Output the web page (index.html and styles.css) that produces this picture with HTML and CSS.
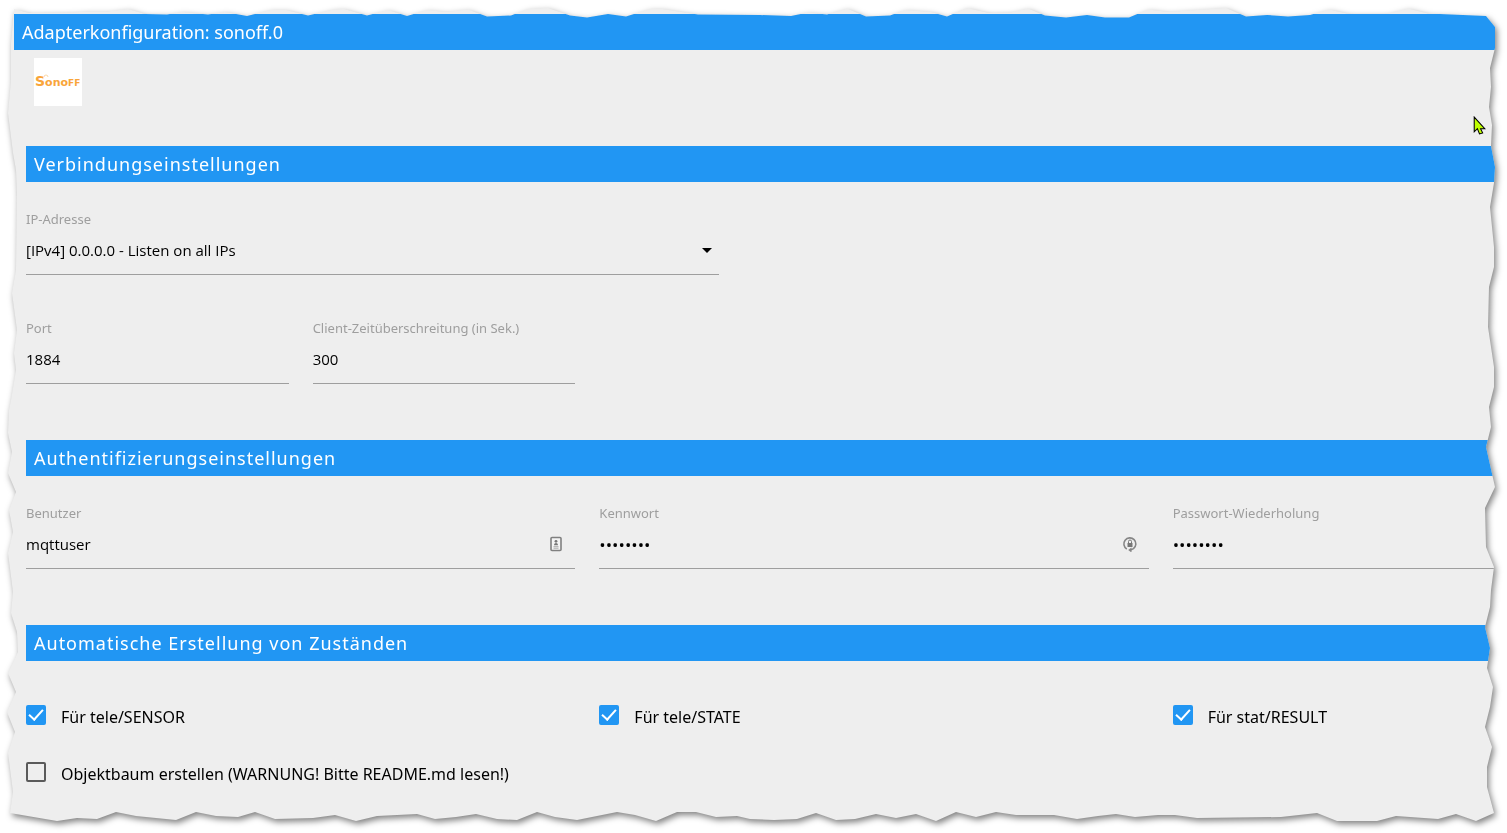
FILE: index.html
```html
<!DOCTYPE html>
<html lang="de">
<head>
    <meta charset="UTF-8">
    <meta name="viewport" content="width=device-width, initial-scale=1.0">
    <title>Adapterkonfiguration: sonoff.0</title>
    <link rel="stylesheet" href="styles.css">
</head>
<body>

<!-- Torn paper outline, scaled to the size of the sheet -->
<svg class="defs" width="0" height="0" aria-hidden="true">
    <clipPath id="torn" clipPathUnits="objectBoundingBox" transform="scale(0.00066357 0.00120048)">
        <polygon points="14,9 29,13 73,12.5 85,11.5 108,11.5 128,9 145,14 167,14.5 182,12 208,14.5 225,12 247,16 271,10 286,10 308,15.5 334,9.5 344,9 367,15.5 388,10 407,16 427,10 446,12 468,9.5 487,16.5 511,15.5 528,9 548,8 570,15.5 587,17.5 608,14 626,16.5 650,9 662,9 698,14.5 760,15 791,16 808,12.5 827,14.5 847,8.5 866,16.5 890,15.5 905,10 931,12 947,16.5 967,8 989,13 1011,12.5 1028,8.5 1045,15.5 1066,17.5 1087,15 1105,17.5 1129,17.5 1148,9.5 1168,12 1226,8 1246,16.5 1267,15 1288,16.5 1310,15 1329,9.5 1349,14 1387,14 1408,8.5 1428,13.5 1486,16 1495,27
        1495,48 1490,68 1491,87 1489,107 1492,125 1491,146 1495,167 1494,183 1490,207 1492,227 1494,247 1494,267 1489,287 1488,327 1494,367 1494,387 1489,407 1491,427 1486,447 1495,487 1485,508 1486,547 1494,567 1491,590 1490,607 1485,627 1490,648 1487,668 1493,687 1490,707 1485,727 1492,747 1487,767 1487,787 1494,813
        1476,821 1456,814 1438,819 1396,816 1377,821 1337,821 1317,813 1281,817 1197,818 1175,815 1158,815 1135,817 1116,814 1098,816 1077,819 1054,815 1016,815 996,812 976,817 956,812 936,821 916,814 896,818 876,814 855,819 836,820 816,813 797,819 774,820 750,819 737,816 716,817 696,812 677,812 656,821 635,815 617,812 577,820 555,817 537,812 517,820 497,819 476,814 456,817 435,819 417,814 377,816 356,821 335,815 313,818 275,819 255,812 238,817 216,816 196,812 176,820 136,816 116,812 97,819 77,818 57,821 10,813
        13,792 8,753 15,732 7,712 16,692 8,673 18,652 17,632 11,613 13,592 8,553 13,532 9,510 16,492 8,473 12,452 8,433 9,410 11,400 16,370 14,353 17,330 12,293 16,270 17,193 16,170 13,153 8,113 11,80 11,43"/>
    </clipPath>
</svg>

<div class="shadow">
    <main class="sheet">
        <h1 class="title">Adapterkonfiguration: sonoff.0</h1>

        <form class="config">
            <svg class="logo" viewBox="0 0 48 48" role="img" aria-label="Sonoff">
                <rect width="48" height="48" fill="#fff"/>
                <text class="logo-text" x="1" y="28"><tspan class="logo-big">S</tspan>ono<tspan class="logo-small">FF</tspan></text>
                <path d="M10 19a2 2 0 0 1 4 0" fill="none" stroke="#fcd9a8"/>
            </svg>

            <h2 class="section-title">Verbindungseinstellungen</h2>
            <div class="row">
                <div class="field col5">
                    <label for="bind">IP-Adresse</label>
                    <select id="bind">
                        <option>[IPv4] 0.0.0.0 - Listen on all IPs</option>
                    </select>
                    <svg class="caret" viewBox="0 0 10 5" aria-hidden="true"><path d="M0 0h10L5 5z"/></svg>
                </div>
            </div>
            <div class="row">
                <div class="field col2">
                    <label for="port">Port</label>
                    <input type="text" id="port" value="1884">
                </div>
                <div class="field col2">
                    <label for="timeout">Client-Zeitüberschreitung (in Sek.)</label>
                    <input type="text" id="timeout" value="300">
                </div>
            </div>

            <h2 class="section-title">Authentifizierungseinstellungen</h2>
            <div class="row">
                <div class="field col4">
                    <label for="user">Benutzer</label>
                    <input type="text" id="user" value="mqttuser">
                    <svg class="field-icon" viewBox="0 0 16 16" aria-hidden="true">
                        <rect x="3" y="1.500" width="10" height="13" rx="1" fill="#f4f4f4" stroke="#808080" stroke-width="1.600"/>
                        <circle cx="8" cy="5.300" r="1.400" fill="#777"/>
                        <path d="M6 9.200c0-3 4-3 4 0z" fill="#777"/>
                        <path d="M5.500 10.700h5M5.500 12.200h5" stroke="#aaa"/>
                    </svg>
                </div>
                <div class="field col4">
                    <label for="pass">Kennwort</label>
                    <input type="password" id="pass" value="mqttpass">
                    <svg class="field-icon" viewBox="0 0 16 16" aria-hidden="true">
                        <path d="M4.800 13A6 6 0 1 1 11.500 12.600L8.500 14" fill="none" stroke="#858585" stroke-width="1.600"/>
                        <path d="M9.500 11.500v5L6.200 14z" fill="#858585"/>
                        <rect x="5.500" y="7" width="5" height="4" fill="#777"/>
                        <path d="M6.500 7V5.500a1.500 1.500 0 0 1 3 0V7" fill="none" stroke="#777"/>
                    </svg>
                </div>
                <div class="field col4">
                    <label for="pass2">Passwort-Wiederholung</label>
                    <input type="password" id="pass2" value="mqttpass">
                </div>
            </div>

            <h2 class="section-title">Automatische Erstellung von Zuständen</h2>
            <div class="row checks">
                <div class="check col4">
                    <input type="checkbox" id="sensor" checked>
                    <label for="sensor">Für tele/SENSOR</label>
                </div>
                <div class="check col4">
                    <input type="checkbox" id="state" checked>
                    <label for="state">Für tele/STATE</label>
                </div>
                <div class="check col4">
                    <input type="checkbox" id="result" checked>
                    <label for="result">Für stat/RESULT</label>
                </div>
                <div class="check col12">
                    <input type="checkbox" id="tree">
                    <label for="tree">Objektbaum erstellen (WARNUNG! Bitte README.md lesen!)</label>
                </div>
            </div>
        </form>

        <svg class="pointer" viewBox="0 0 12 18" aria-hidden="true">
            <path d="M1 1v14l3-3 2 5 3-1-2-4h4z" fill="#bfff00" stroke="#000"/>
        </svg>
    </main>
</div>

</body>
</html>
```
FILE: styles.css
```css
* {
    box-sizing: border-box;
}

body {
    margin: 0;
    background: #fff;
    color: #000;
    font-family: "Noto Sans", sans-serif;
    overflow: hidden;
}

.defs {
    position: absolute;
}

.shadow {
    filter: drop-shadow(2px 3px 3px rgba(0, 0, 0, 0.5));
}

.sheet {
    position: relative;
    min-height: 100vh;
    padding: 14px 0 0 14px;
    background: #eee;
    overflow: hidden;
    clip-path: url(#torn);
}

.title,
.section-title {
    margin: 0;
    padding: 0 8px;
    background: #2196f3;
    color: #fff;
    font-size: 18px;
    font-weight: 400;
    line-height: 36px;
    white-space: nowrap;
}

/* the form runs on past the right edge of the sheet */
.config {
    width: calc(100% + 227px);
    padding-top: 8px;
}

.logo {
    display: block;
    width: 48px;
    height: 48px;
    margin-left: 20px;
}

.logo-text {
    font: bold 11px "DejaVu Sans", sans-serif;
    fill: #f9a53a;
}

.logo-big {
    font-size: 14px;
}

.logo-small {
    font-size: 9px;
}

.section-title {
    margin: 40px 12px 0;
    letter-spacing: 1px;
}

.row {
    display: grid;
    grid-template-columns: repeat(12, 1fr);
    padding-bottom: 16px;
}

.col2 { grid-column: span 2; }
.col4 { grid-column: span 4; }
.col5 { grid-column: span 5; }
.col12 { grid-column: span 12; }

.field {
    position: relative;
    padding: 29px 12px 0;
}

.field label {
    display: block;
    color: #9e9e9e;
    font-size: 13px;
    line-height: 17px;
    white-space: nowrap;
}

.field input,
.field select {
    display: block;
    width: 100%;
    height: 47px;
    padding: 0 0 2px;
    border: none;
    border-bottom: 1px solid #9e9e9e;
    border-radius: 0;
    background: transparent;
    color: #000;
    font-family: "Open Sans", sans-serif;
    font-size: 15px;
    outline: none;
    appearance: none;
}

.field input[type="password"] {
    font-size: 17px;
}

.caret {
    position: absolute;
    right: 19px;
    bottom: 22px;
    width: 10px;
    height: 5px;
    pointer-events: none;
}

.field-icon {
    position: absolute;
    right: 23px;
    bottom: 17px;
    width: 16px;
    height: 16px;
}

.checks {
    row-gap: 33px;
    padding-top: 42px;
}

.check {
    display: flex;
    align-items: center;
    gap: 15px;
    height: 24px;
    padding: 0 12px;
}

.check label {
    padding-top: 3px;
    font-size: 16px;
    line-height: 24px;
}

.check input {
    width: 20px;
    height: 20px;
    margin: 0;
    border: 2px solid #5a5a5a;
    border-radius: 2px;
    appearance: none;
}

.check input:checked {
    display: grid;
    place-items: center;
    border-color: #2196f3;
    background: #2196f3;
}

.check input:checked::before {
    content: "";
    width: 12px;
    height: 6px;
    border: solid #fff;
    border-width: 0 0 2px 2px;
    transform: translateY(-2px) rotate(-48deg);
}

.pointer {
    position: absolute;
    top: 116px;
    right: 21px;
    width: 13px;
    height: 19px;
}
```
